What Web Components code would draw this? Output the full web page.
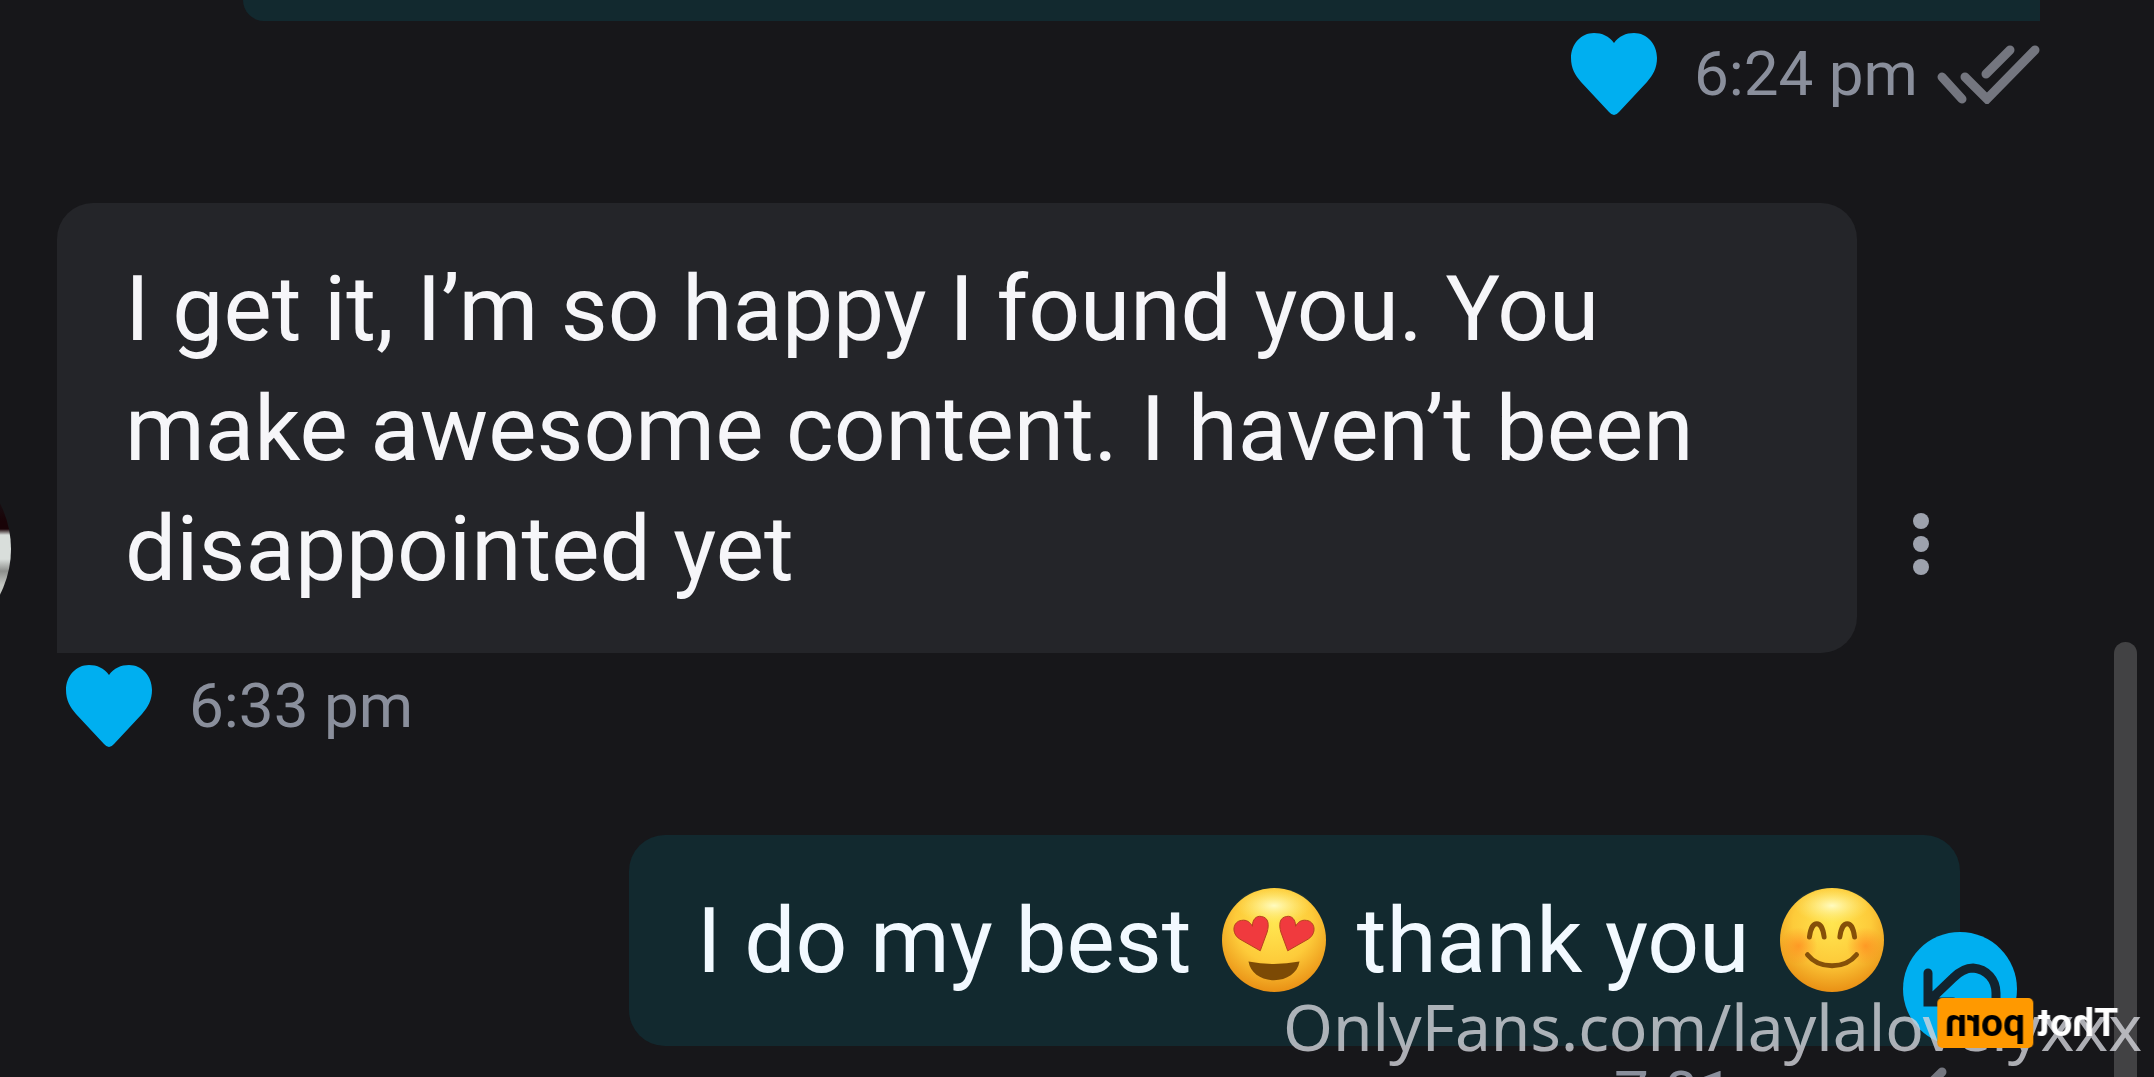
<!DOCTYPE html>
<html lang="en">
<head>
<meta charset="utf-8">
<meta name="viewport" content="width=device-width, initial-scale=1">
<title>Messages</title>
<style>
  body {
    margin: 0;
    background: #17171a;
    font-family: Roboto, sans-serif;
  }
</style>
</head>
<body>
<chat-thread>
  <chat-message side="out" class="first" time="6:24 pm" status="read" liked></chat-message>
  <chat-message side="in" time="6:33 pm" liked menu>I get it, I’m so happy I found you. You make awesome content. I haven’t been disappointed yet</chat-message>
  <chat-message side="out" class="last" time="7:01 pm" status="sent" reply>I do my best <chat-emoji kind="love"></chat-emoji> thank you <chat-emoji kind="smile"></chat-emoji></chat-message>
</chat-thread>
<page-marks></page-marks>

<script>
'use strict';

(function() {
  const HEART = `
    <svg viewBox="0 0 88 84" width="88" height="84" aria-hidden="true">
      <path fill="#00aff0" d="M44 11C49 4 56 1 64 1C77 1 87 12 87 26C87 36 83 43 77 50L49 80Q44 86 39 80L11 50C5 43 1 36 1 26C1 12 11 1 24 1C32 1 39 4 44 11Z"/>
    </svg>
  `;

  const CHECK_PATHS = {
    read: 'M6 33L26 55M29 33L51 55L99 6M50 30L74 6',
    sent: 'M14 35L36 57L86 8'
  };

  const renderChecks = status => `
    <svg viewBox="0 0 104 60" width="104" height="60" aria-hidden="true">
      <path d="${CHECK_PATHS[status]}" fill="none" stroke="#74767f" stroke-width="9" stroke-linecap="round"/>
    </svg>
  `;

  class ChatThread extends HTMLElement {
    constructor() {
      super();

      this.attachShadow({ mode: 'open' });
      this.shadowRoot.innerHTML = `
        <style>
          :host {
            display: block;
            height: 100vh;
            overflow: hidden;
          }

          main {
            display: flex;
            flex-direction: column;
            gap: 76px;
            padding: 0 114px 0 57px;
          }

          /* Only the bottom edge of the oldest message is in view. */
          ::slotted(.first) {
            --bubble-height: 21px;
            --bubble-padding: 0;
            margin-left: 186px;
          }

          ::slotted(.last) {
            --meta-height: 96px;
            margin-right: 80px;
          }
        </style>
        <main><slot></slot></main>
      `;
    }
  }

  class ChatMessage extends HTMLElement {
    constructor() {
      super();

      const out = this.getAttribute('side') === 'out';
      const status = this.getAttribute('status');
      const has = name => this.hasAttribute(name);

      this.attachShadow({ mode: 'open' });
      this.shadowRoot.innerHTML = `
        <style>
          :host {
            display: flex;
            flex-direction: column;
            align-items: ${out ? 'flex-end' : 'flex-start'};
          }

          .row {
            position: relative;
            display: flex;
            align-items: flex-end;
            gap: 46px;
          }

          :host(.first) .row {
            width: 100%;
          }

          .bubble {
            flex: 1;
            box-sizing: border-box;
            min-height: var(--bubble-height, 211px);
            max-width: 1800px;
            padding: var(--bubble-padding, 46px 68px 44px);
            border-radius: 36px;
            color: #f6f6f9;
            font-size: 91px;
            line-height: 120px;
          }

          .in {
            border-bottom-left-radius: 0;
            background: #242529;
          }

          .out {
            border-bottom-right-radius: 0;
            background: #12292f;
            color: #f2f9ff;
          }

          :host(.first) .bubble {
            border-top-left-radius: 0;
            border-top-right-radius: 0;
          }

          .meta {
            display: flex;
            align-items: center;
            height: var(--meta-height, 106px);
            padding-left: 8px;
            color: #8a8f9c;
            font-size: 62px;
            line-height: 80px;
          }

          .meta svg {
            flex: none;
          }

          time {
            margin: 0 18px 0 36px;
          }

          button {
            display: flex;
            padding: 0;
            border: 0;
            background: none;
          }

          .menu {
            width: 36px;
            justify-content: center;
            padding-bottom: 78px;
          }

          .reply {
            position: absolute;
            right: -57px;
            bottom: 0;
            border-radius: 50%;
            background: #00aff0;
          }

          .avatar {
            position: absolute;
            left: -246px;
            bottom: 4px;
            width: 200px;
            height: 200px;
            border-radius: 50%;
            background: linear-gradient(#17171a 20%, #190307 36% 40%, #d9dedb 43% 55%, #8d8f8c 61%, #c3c6c2 68%);
          }
        </style>
        <div class="row">
          ${out ? '' : '<div class="avatar"></div>'}
          <div class="bubble ${out ? 'out' : 'in'}"><slot></slot></div>
          ${has('menu') ? `
            <button class="menu" aria-label="Message options">
              <svg viewBox="0 0 16 62" width="16" height="62" fill="#9da2ad">
                <circle cx="8" cy="8" r="8"/>
                <circle cx="8" cy="31" r="8"/>
                <circle cx="8" cy="54" r="8"/>
              </svg>
            </button>
          ` : ''}
          ${has('reply') ? `
            <button class="reply" aria-label="Undo">
              <svg viewBox="0 0 114 114" width="114" height="114" fill="none" stroke="#12232e" stroke-width="9" stroke-linecap="round">
                <path d="M25 41V70H50M27 68L50 46C58 38 64 36 70 36C84 37 93 48 93 61V72"/>
              </svg>
            </button>
          ` : ''}
        </div>
        <div class="meta">
          ${has('liked') ? HEART : ''}
          <time>${this.getAttribute('time')}</time>
          ${status ? renderChecks(status) : ''}
        </div>
      `;
    }
  }

  class ChatEmoji extends HTMLElement {
    constructor() {
      super();

      const love = this.getAttribute('kind') === 'love';
      const face = love ? `
        <g fill="#f03a3e" stroke="#b5401f" stroke-width="1">
          <path d="M39 64L18 52C9 46 11 34 20 33C25 32 29 35 31 39C31 32 35 28 40 29C48 30 48 38 46 45Z"/>
          <path d="M67 64L88 52C97 46 95 34 86 33C81 32 77 35 75 39C75 32 71 28 66 29C58 30 58 38 60 45Z"/>
        </g>
        <path fill="#7c4a05" d="M27 75Q53 80 79 75C77 87 66 94 53 94C40 94 29 87 27 75Z"/>
      ` : `
        <g fill="none" stroke="#855009" stroke-width="5" stroke-linecap="round">
          <path d="M30 50C32 32 43 32 45 50M61 50C63 32 74 32 76 50"/>
          <path d="M28 68C40 83 66 83 78 68"/>
        </g>
      `;

      this.attachShadow({ mode: 'open' });
      this.shadowRoot.innerHTML = `
        <style>
          :host {
            display: inline-block;
            width: 104px;
            height: 104px;
            margin: 0 8px;
            vertical-align: -20px;
            line-height: 0;
          }
        </style>
        <svg viewBox="0 0 106 106" width="104" height="104" role="img" aria-label="${love ? 'heart eyes' : 'smiling'}">
          <defs>
            <radialGradient id="skin" cx="50%" cy="34%" r="68%">
              <stop offset="0" stop-color="#ffe650"/>
              <stop offset="0.55" stop-color="#fdcb3a"/>
              <stop offset="1" stop-color="#e88c12"/>
            </radialGradient>
            <radialGradient id="shine">
              <stop offset="0" stop-color="#fffbc0"/>
              <stop offset="1" stop-color="#ffef80" stop-opacity="0"/>
            </radialGradient>
            <radialGradient id="blush">
              <stop offset="0" stop-color="#ff7a18" stop-opacity="0.6"/>
              <stop offset="1" stop-color="#ff7a18" stop-opacity="0"/>
            </radialGradient>
          </defs>
          <circle cx="53" cy="53" r="53" fill="url(#skin)"/>
          <ellipse cx="53" cy="18" rx="38" ry="18" fill="url(#shine)"/>
          ${love ? '' : '<circle cx="19" cy="59" r="19" fill="url(#blush)"/><circle cx="87" cy="59" r="19" fill="url(#blush)"/>'}
          ${face}
        </svg>
      `;
    }
  }

  // Scrollbar and watermarks, drawn over the thread.
  class PageMarks extends HTMLElement {
    constructor() {
      super();

      this.attachShadow({ mode: 'open' });
      this.shadowRoot.innerHTML = `
        <style>
          :host {
            display: block;
          }

          .thumb {
            position: fixed;
            top: 642px;
            right: 17px;
            bottom: -20px;
            width: 23px;
            border-radius: 12px;
            background: #424244;
          }

          .owner {
            position: fixed;
            right: 12px;
            bottom: 10px;
            color: rgba(211, 213, 219, 0.8);
            font-family: "Noto Sans", sans-serif;
            font-size: 64px;
            line-height: 80px;
          }

          .site {
            position: fixed;
            right: 36px;
            bottom: 29px;
            display: flex;
            align-items: center;
            gap: 4px;
            transform: scaleX(-1);
            color: #fff;
            font-family: Roboto, sans-serif;
            font-size: 39px;
            font-weight: 700;
            line-height: 50px;
          }

          .tag {
            padding: 0 8px;
            border-radius: 5px;
            background: #ff9900;
            color: #000;
          }
        </style>
        <div class="thumb"></div>
        <div class="owner">OnlyFans.com/laylalovelyxxx</div>
        <div class="site"><span>Thot</span><span class="tag">porn</span></div>
      `;
    }
  }

  customElements.define('chat-emoji', ChatEmoji);
  customElements.define('chat-message', ChatMessage);
  customElements.define('chat-thread', ChatThread);
  customElements.define('page-marks', PageMarks);
})();
</script>
</body>
</html>
